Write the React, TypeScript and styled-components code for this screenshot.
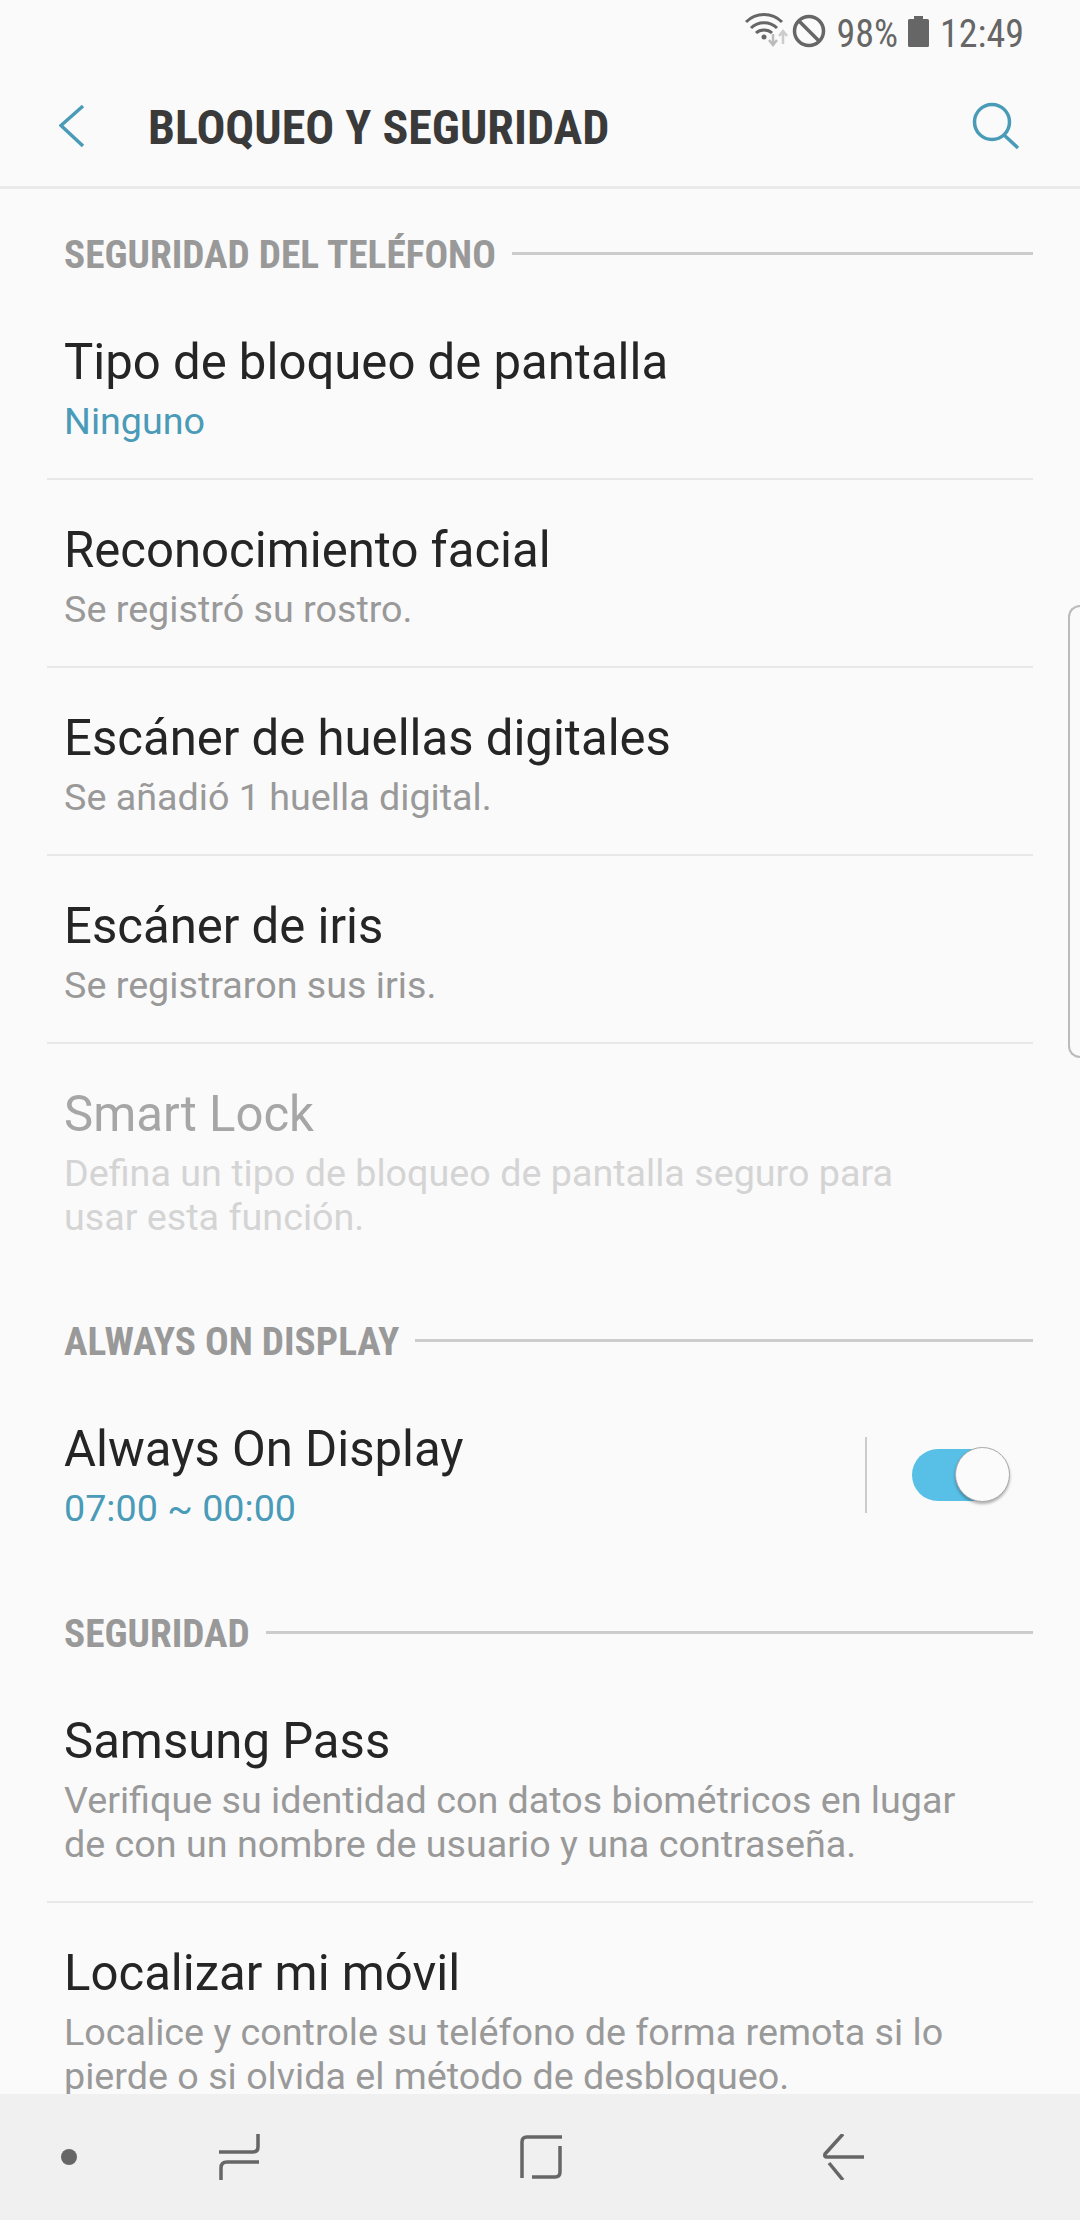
import styled, { createGlobalStyle } from "styled-components";

const GlobalStyle = createGlobalStyle`
    html, body { margin: 0; padding: 0; background: #fafafa; }
    * { box-sizing: border-box; }
    body { font-family: Roboto, "Liberation Sans", sans-serif; }
`;

const Screen = styled.div`
    position: relative;
    display: flex;
    flex-direction: column;
    width: 1080px;
    height: 2220px;
    overflow: hidden;
    background: #fafafa;
`;

const StatusBar = styled.div`
    display: flex;
    align-items: center;
    justify-content: flex-end;
    height: 62px;
    padding-right: 56px;
    color: #666;
    font-size: 38px;
    font-stretch: condensed;
`;

const StatusText = styled.span`
    padding-top: 5px;
    line-height: 50px;
`;

const Toolbar = styled.div`
    display: flex;
    align-items: center;
    height: 127px;
    padding: 4px 60px 0 59px;
    border-bottom: 3px solid #eaeaea;
`;

const ToolbarTitle = styled.div`
    flex: 1;
    margin-left: 63px;
    padding-top: 3px;
    color: #3a3a3a;
    font-size: 48px;
    font-weight: 700;
    font-stretch: condensed;
    white-space: nowrap;
`;

const Content = styled.div`
    flex: 1;
    min-height: 0;
    overflow: hidden;
`;

const SectionHeader = styled.div`
    display: flex;
    align-items: center;
    height: 103px;
    padding: 46px 47px 17px 64px;
`;

const SectionLabel = styled.div`
    color: #999;
    font-size: 39.3px;
    font-weight: 700;
    font-stretch: condensed;
    line-height: 40px;
    white-space: nowrap;
`;

const SectionLine = styled.div`
    flex: 1;
    height: 3px;
    margin: -4px 0 0 16px;
    background: #ccc;
`;

const Row = styled.div<{ $last?: boolean }>`
    margin: 0 47px 0 47px;
    padding: 40px 17px ${(p) => (p.$last ? 37 : 35)}px;
    border-bottom: ${(p) => (p.$last ? "none" : "2px solid #e8e8e8")};
`;

const SwitchRow = styled(Row)`
    display: flex;
    align-items: center;
    padding-bottom: 38px;
`;

const RowText = styled.div`
    flex: 1;
`;

const RowTitle = styled.div<{ $disabled?: boolean }>`
    color: ${(p) => (p.$disabled ? "#a6a6a6" : "#252525")};
    font-size: 49.1px;
    line-height: 60px;
    white-space: nowrap;
`;

const RowSub = styled.div<{ $tone?: "accent" | "disabled" }>`
    margin-top: 7px;
    color: ${(p) => (p.$tone === "accent" ? "#4a9bb8" : p.$tone === "disabled" ? "#d4d4d4" : "#999")};
    font-size: 37.7px;
    line-height: 44px;
    white-space: pre-line;
`;

const SwitchDivider = styled.div`
    width: 2px;
    height: 76px;
    margin-right: 45px;
    background: #ccc;
`;

const SwitchTrack = styled.div`
    position: relative;
    width: 94px;
    height: 52px;
    margin-right: 10px;
    border-radius: 26px;
    background: #58bfe6;
`;

const SwitchThumb = styled.div`
    position: absolute;
    top: -2px;
    right: -4px;
    width: 55px;
    height: 55px;
    border-radius: 50%;
    border: 1px solid #aaa;
    background: #fbfbfb;
    box-shadow: 0 2px 3px rgba(0, 0, 0, 0.3);
`;

const EdgeHandle = styled.div`
    position: absolute;
    top: 605px;
    right: 0;
    width: 12px;
    height: 453px;
    border: 2px solid #bbb;
    border-right: none;
    border-radius: 16px 0 0 16px;
`;

const NavBar = styled.div`
    display: flex;
    align-items: center;
    height: 126px;
    padding-left: 61px;
    background: #f0f0f0;
`;

const NavDot = styled.div`
    width: 16px;
    height: 16px;
    margin-right: 142px;
    border-radius: 50%;
    background: #666;
`;

const NavSlot = styled.div<{ $mr: number }>`
    display: flex;
    margin-right: ${(p) => p.$mr}px;
`;

const WifiIcon = () => (
    <svg width="46" height="36" viewBox="0 0 46 36" fill="none" style={{ marginRight: 1 }}>
        <path d="M1 9C11 -1 27 -1 37 9" stroke="#666" strokeWidth="3" />
        <path d="M6 15C13 8 25 8 32 15" stroke="#666" strokeWidth="3" />
        <path d="M11 20C15 16 23 16 27 20" stroke="#666" strokeWidth="3" />
        <circle cx="19" cy="24" r="2.5" fill="#666" />
        <path d="M28 21V31M24 27L28 32L32 27" stroke="#bbb" strokeWidth="2.5" />
        <path d="M38 31V19M34 23L38 18L42 23" stroke="#ccc" strokeWidth="2.5" />
    </svg>
);

const BlockedIcon = () => (
    <svg width="34" height="34" viewBox="0 0 34 34" fill="none" style={{ marginRight: 11 }}>
        <circle cx="17" cy="17" r="14.5" stroke="#666" strokeWidth="3.5" />
        <path d="M7 7L27 27" stroke="#666" strokeWidth="3.5" />
    </svg>
);

const BatteryIcon = () => (
    <svg width="21" height="31" viewBox="0 0 21 31" style={{ margin: "0 11px 0 10px" }}>
        <path d="M6 0H15V3H19.500Q21 3 21 4.500V29.500Q21 31 19.500 31H1.500Q0 31 0 29.500V4.500Q0 3 1.500 3H6Z" fill="#666" />
    </svg>
);

const BackIcon = () => (
    <svg width="26" height="44" viewBox="0 0 26 44" fill="none">
        <path d="M24 2L2 21.500L24 42" stroke="#4a9bb8" strokeWidth="3.500" />
    </svg>
);

const SearchIcon = () => (
    <svg width="48" height="48" viewBox="0 0 48 48" fill="none">
        <circle cx="20" cy="20" r="17.500" stroke="#4a9bb8" strokeWidth="3.500" />
        <path d="M32 33L46 46" stroke="#4a9bb8" strokeWidth="3.500" />
    </svg>
);

const RecentsIcon = () => (
    <svg width="41" height="46" viewBox="0 0 41 46" fill="none">
        <path d="M39 0V13Q39 18 34 18H0" stroke="#666" strokeWidth="3.500" />
        <path d="M40 28H8Q2 28 2 34V46" stroke="#666" strokeWidth="3.500" />
    </svg>
);

const HomeIcon = () => (
    <svg width="42" height="44" viewBox="0 0 42 44" fill="none">
        <path d="M42 2H7Q2 2 2 7V43" stroke="#666" strokeWidth="3.500" />
        <path d="M40 11V37Q40 42 35 42H12" stroke="#666" strokeWidth="3.500" />
    </svg>
);

const BackNavIcon = () => (
    <svg width="41" height="46" viewBox="0 0 41 46" fill="none">
        <path d="M20 0L2 20Q1 23 4 23H41" stroke="#666" strokeWidth="3.500" />
        <path d="M6 29L20 46" stroke="#666" strokeWidth="3.500" />
    </svg>
);

export default function App() {
    return (
        <Screen>
            <GlobalStyle />
            <StatusBar>
                <WifiIcon />
                <BlockedIcon />
                <StatusText>98%</StatusText>
                <BatteryIcon />
                <StatusText>12:49</StatusText>
            </StatusBar>
            <Toolbar>
                <BackIcon />
                <ToolbarTitle>BLOQUEO Y SEGURIDAD</ToolbarTitle>
                <SearchIcon />
            </Toolbar>
            <Content>
                <SectionHeader>
                    <SectionLabel>SEGURIDAD DEL TELÉFONO</SectionLabel>
                    <SectionLine />
                </SectionHeader>
                <Row>
                    <RowTitle>Tipo de bloqueo de pantalla</RowTitle>
                    <RowSub $tone="accent">Ninguno</RowSub>
                </Row>
                <Row>
                    <RowTitle>Reconocimiento facial</RowTitle>
                    <RowSub>Se registró su rostro.</RowSub>
                </Row>
                <Row>
                    <RowTitle>Escáner de huellas digitales</RowTitle>
                    <RowSub>Se añadió 1 huella digital.</RowSub>
                </Row>
                <Row>
                    <RowTitle>Escáner de iris</RowTitle>
                    <RowSub>Se registraron sus iris.</RowSub>
                </Row>
                <Row $last>
                    <RowTitle $disabled>Smart Lock</RowTitle>
                    <RowSub $tone="disabled">{"Defina un tipo de bloqueo de pantalla seguro para\nusar esta función."}</RowSub>
                </Row>
                <SectionHeader>
                    <SectionLabel>ALWAYS ON DISPLAY</SectionLabel>
                    <SectionLine />
                </SectionHeader>
                <SwitchRow $last>
                    <RowText>
                        <RowTitle>Always On Display</RowTitle>
                        <RowSub $tone="accent">07:00 ~ 00:00</RowSub>
                    </RowText>
                    <SwitchDivider />
                    <SwitchTrack>
                        <SwitchThumb />
                    </SwitchTrack>
                </SwitchRow>
                <SectionHeader>
                    <SectionLabel>SEGURIDAD</SectionLabel>
                    <SectionLine />
                </SectionHeader>
                <Row>
                    <RowTitle>Samsung Pass</RowTitle>
                    <RowSub>{"Verifique su identidad con datos biométricos en lugar\nde con un nombre de usuario y una contraseña."}</RowSub>
                </Row>
                <Row $last>
                    <RowTitle>Localizar mi móvil</RowTitle>
                    <RowSub>{"Localice y controle su teléfono de forma remota si lo\npierde o si olvida el método de desbloqueo."}</RowSub>
                </Row>
            </Content>
            <NavBar>
                <NavDot />
                <NavSlot $mr={260}><RecentsIcon /></NavSlot>
                <NavSlot $mr={261}><HomeIcon /></NavSlot>
                <NavSlot $mr={0}><BackNavIcon /></NavSlot>
            </NavBar>
            <EdgeHandle />
        </Screen>
    );
}
